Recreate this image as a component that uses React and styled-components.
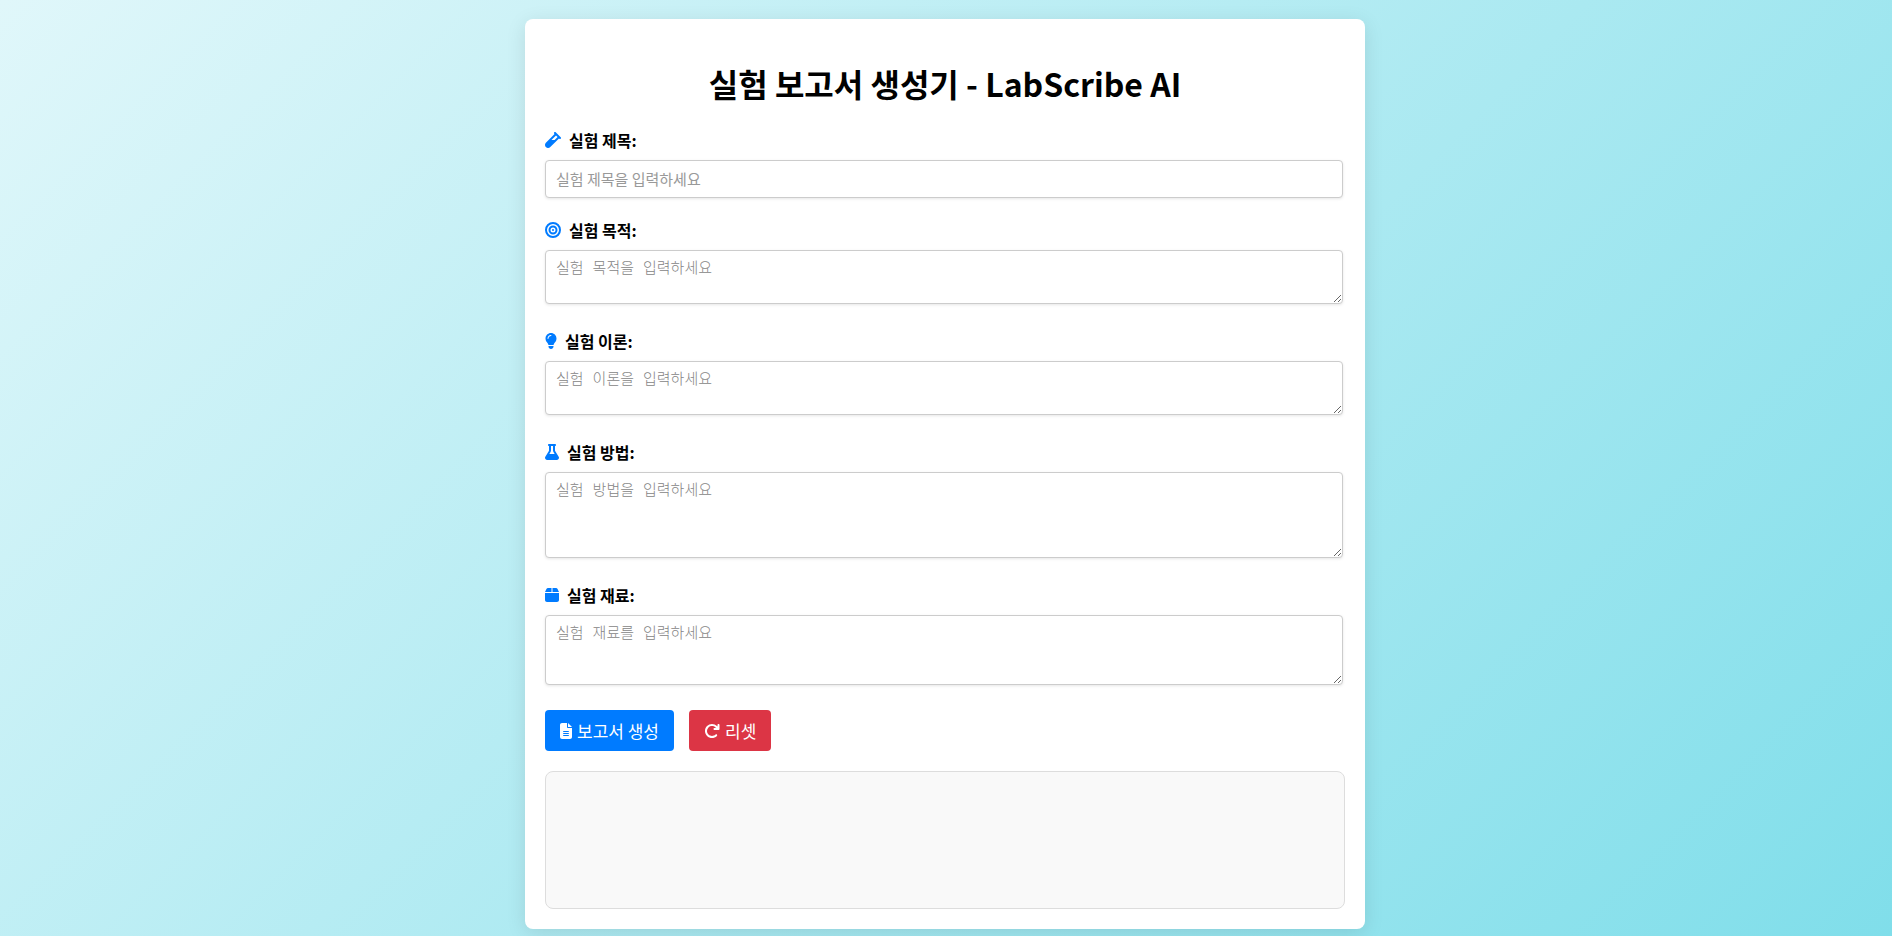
import React, { useState } from 'react';
import styled, { createGlobalStyle } from 'styled-components';
import {
  FaArrowRotateRight,
  FaBox,
  FaBullseye,
  FaFileLines,
  FaFlask,
  FaLightbulb,
  FaVial,
} from 'react-icons/fa6';

// iconWidth follows the natural width of each glyph at a 16px height
const fields = [
  { id: 'title', name: '제목', particle: '을', icon: FaVial, iconWidth: 16 },
  {
    id: 'purpose',
    name: '목적',
    particle: '을',
    icon: FaBullseye,
    iconWidth: 16,
    rows: 2,
  },
  {
    id: 'theory',
    name: '이론',
    particle: '을',
    icon: FaLightbulb,
    iconWidth: 12,
    rows: 2,
  },
  {
    id: 'method',
    name: '방법',
    particle: '을',
    icon: FaFlask,
    iconWidth: 14,
    rows: 4,
  },
  {
    id: 'materials',
    name: '재료',
    particle: '를',
    icon: FaBox,
    iconWidth: 14,
    rows: 3,
  },
];

export default function App() {
  const [values, setValues] = useState({});
  const [report, setReport] = useState('');

  const handleChange = e =>
    setValues({ ...values, [e.target.name]: e.target.value });

  const handleSubmit = e => {
    e.preventDefault();
    setReport(
      fields
        .map(field => `실험 ${field.name}: ${values[field.id] || ''}`)
        .join('\n')
    );
  };

  const handleReset = () => {
    setValues({});
    setReport('');
  };

  return (
    <Page>
      <GlobalStyle />
      <Container>
        <Title>실험 보고서 생성기 - LabScribe AI</Title>

        <form onSubmit={handleSubmit} onReset={handleReset}>
          {fields.map(({ id, name, particle, icon: Icon, iconWidth, rows }) => {
            const Control = rows ? TextArea : TextInput;

            return (
              <Field key={id}>
                <Label htmlFor={id} $iconWidth={iconWidth}>
                  <Icon aria-hidden="true" />
                  {`실험 ${name}:`}
                </Label>
                <Control
                  id={id}
                  name={id}
                  rows={rows}
                  value={values[id] || ''}
                  onChange={handleChange}
                  placeholder={`실험 ${name}${particle} 입력하세요`}
                />
              </Field>
            );
          })}

          <Actions>
            <Button type="submit" $color="#007bff" $iconWidth={12}>
              <FaFileLines aria-hidden="true" />
              보고서 생성
            </Button>
            <Button type="reset" $color="#dc3545" $iconWidth={16}>
              <FaArrowRotateRight aria-hidden="true" />
              리셋
            </Button>
          </Actions>
        </form>

        <Output aria-live="polite">{report}</Output>
      </Container>
    </Page>
  );
}

const GlobalStyle = createGlobalStyle`
  body {
    margin: 0;
    font-family: 'Noto Sans CJK KR', sans-serif;
    color: #000;
  }
`;

const Page = styled.div`
  display: flex;
  justify-content: center;
  align-items: flex-start;
  min-height: 100vh;
  padding: 19px 22px 7px 20px;
  box-sizing: border-box;
  background: linear-gradient(135deg, #e0f7fa, #80deea);
`;

const Container = styled.main`
  width: 100%;
  max-width: 840px;
  padding: 20px;
  box-sizing: border-box;
  background: #fff;
  border-radius: 8px;
  box-shadow: 0 4px 20px rgba(0, 0, 0, 0.1);
`;

const Title = styled.h1`
  margin: 21px 0;
  font-size: 32px;
  line-height: 47px;
  text-align: center;
`;

const Field = styled.div`
  display: flex;
  flex-direction: column;
`;

const Label = styled.label`
  display: flex;
  align-items: center;
  gap: 8px;
  margin-bottom: 8px;
  font-size: 16px;
  font-weight: bold;
  line-height: 24px;

  svg {
    width: ${props => props.$iconWidth}px;
    height: 16px;
    color: #007bff;
  }
`;

const TextInput = styled.input`
  display: block;
  width: calc(100% - 2px);
  height: 38px;
  margin: 0 0 20px;
  padding: 9px 10px 11px;
  box-sizing: border-box;
  border: 1px solid #ccc;
  border-radius: 4px;
  box-shadow: 0 1px 3px rgba(0, 0, 0, 0.1);
  font-family: inherit;
  font-size: 15px;
  line-height: 16px;

  &::placeholder {
    color: #999;
  }
`;

const TextArea = styled(TextInput).attrs({ as: 'textarea' })`
  height: auto;
  margin-bottom: 25px;
  padding: 11px 10px 9px;
  font-family: 'Liberation Mono', 'Noto Sans CJK KR', monospace;
  font-weight: 300;
  resize: vertical;

  &::placeholder {
    color: #858585;
  }
`;

const Actions = styled.div`
  display: flex;
  gap: 15px;
`;

const Button = styled.button`
  display: flex;
  align-items: center;
  gap: 5px;
  padding: 8px 15px;
  border: none;
  border-radius: 4px;
  background: ${props => props.$color};
  color: #fff;
  font-family: inherit;
  font-size: 17px;
  line-height: 25px;
  cursor: pointer;

  svg {
    width: ${props => props.$iconWidth}px;
    height: 16px;
  }
`;

const Output = styled.section`
  min-height: 138px;
  margin-top: 20px;
  padding: 20px;
  box-sizing: border-box;
  border: 1px solid #ddd;
  border-radius: 8px;
  background: #f9f9f9;
  white-space: pre-wrap;
`;
